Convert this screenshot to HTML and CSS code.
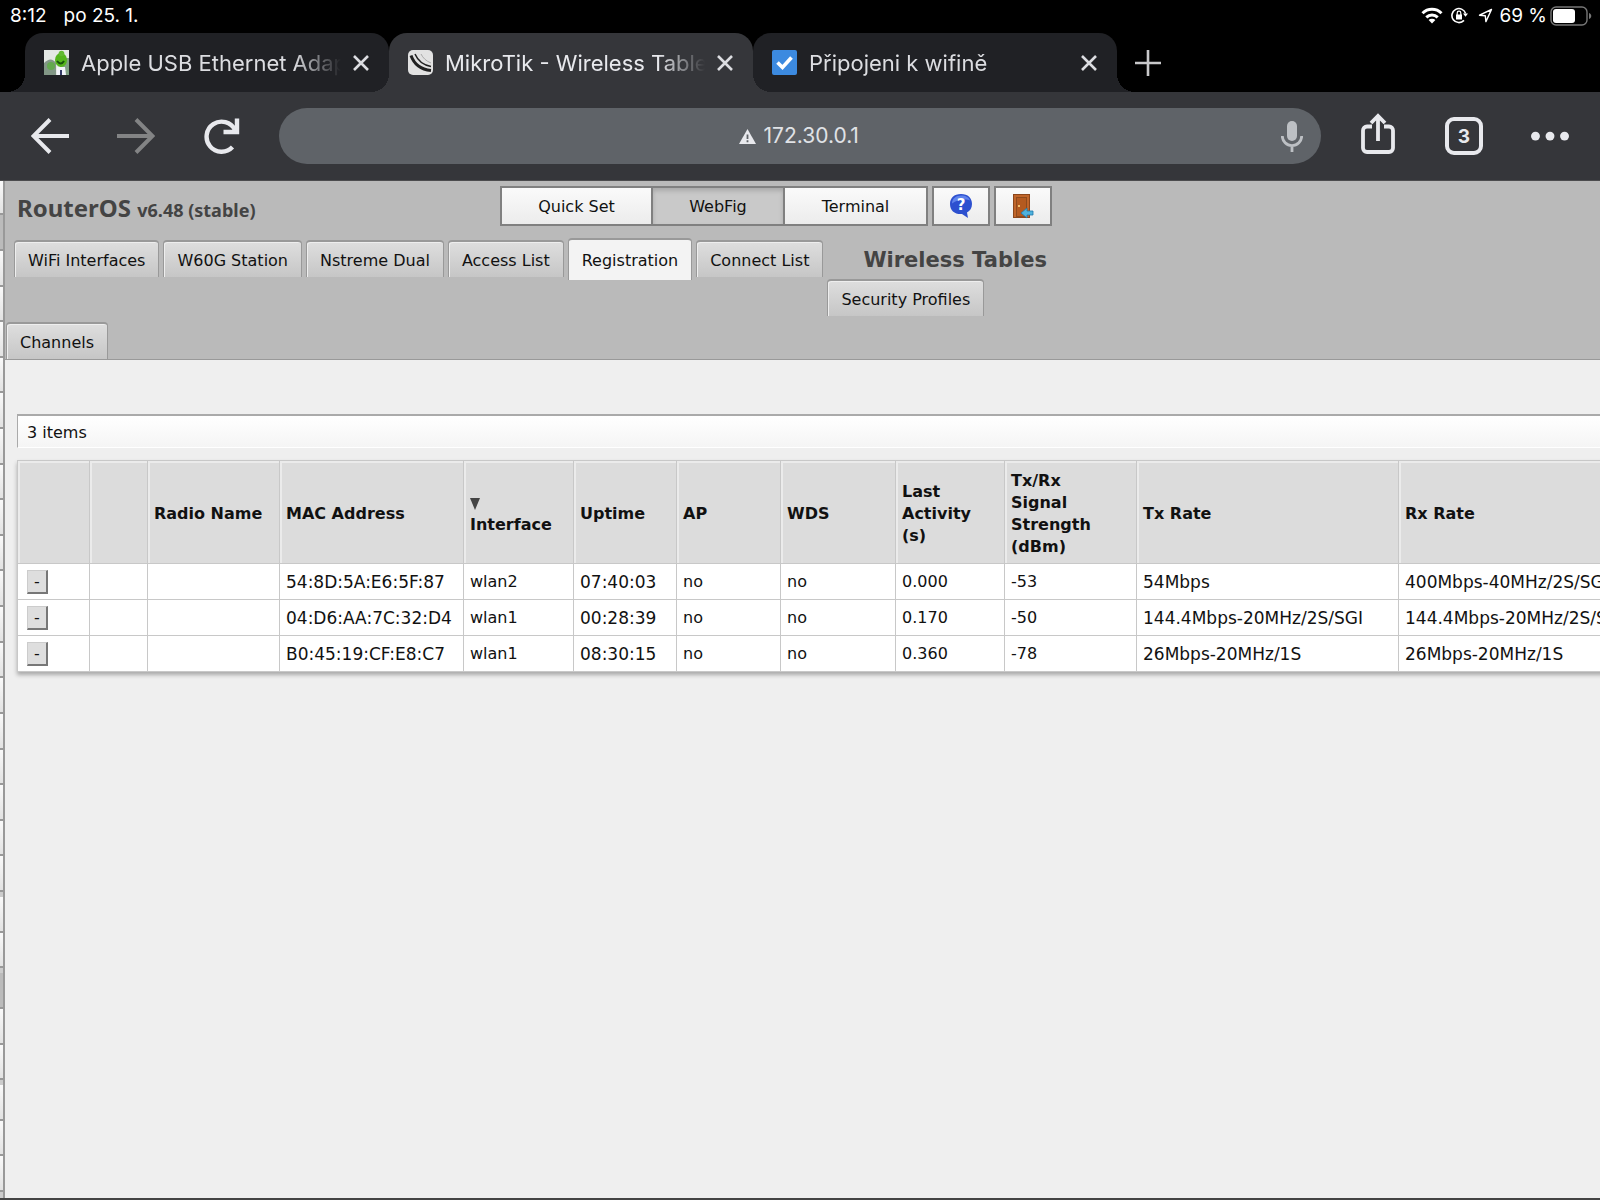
FILE: index.html
```
<!DOCTYPE html>
<html lang="cs">
	<head>
		<meta charset="UTF-8">
		<title>MikroTik - Wireless Tables</title>
		<link rel="stylesheet" href="styles.css">
	</head>
	<body>
		<div class="status">
			<span>8:12</span>
			<span>po 25. 1.</span>
			<div class="status-right">
				<svg class="wifi" width="22" height="17" viewBox="0 0 22 17"><g fill="none" stroke="#fff" stroke-width="3"><path d="M1.5 6.2a13.6 13.6 0 0 1 19 0"/><path d="M5.3 10.3a8.2 8.2 0 0 1 11.4 0"/></g><path fill="#fff" d="M11 16.5l-3.4-3.4a4.8 4.8 0 0 1 6.8 0z"/></svg>
				<svg class="lock" width="17" height="17" viewBox="0 0 17 17"><path d="M14.6 6.5A7 7 0 1 0 13 13.4" fill="none" stroke="#fff" stroke-width="1.6"/><path fill="#fff" d="M12 6.5h5l-2.5 3.2zM5 7.6h6v4.8H5z"/><path d="M6.2 8V6a1.8 1.8 0 0 1 3.6 0v2" fill="none" stroke="#fff" stroke-width="1.2"/></svg>
				<svg class="loc" width="15" height="15" viewBox="0 0 15 15"><path d="M13.5 1.5L1.5 7.2l5.8.6.6 5.8z" fill="none" stroke="#fff" stroke-width="1.4" stroke-linejoin="round"/></svg>
				<span class="percent">69 %</span>
				<svg width="42" height="20" viewBox="0 0 42 20"><rect x="1" y="1" width="36" height="18" rx="5" fill="none" stroke="#777" stroke-width="1.4"/><rect x="3" y="3" width="22" height="14" rx="3" fill="#fff"/><path d="M39 7c3 1 3 5 0 6z" fill="#777"/></svg>
			</div>
		</div>

		<div class="tabs">
			<div class="tab">
				<svg class="fav" viewBox="0 0 25 25"><rect width="25" height="25" fill="#e4e8e4"/><path fill="#829786" d="M0 13q7-7 12 0v12H0z"/><path fill="#80a184" d="M16 8h9v17h-9z"/><circle cx="7" cy="16" r="4" fill="#63a94e"/><path fill="#f2f4fa" d="M13 17h8l1 8h-9z"/><ellipse cx="17" cy="10" rx="6" ry="7" fill="#54b51c"/><circle cx="17.500" cy="3.500" r="2.800" fill="#62ba32"/><path d="M13 11q4 5 7 0" fill="none" stroke="#17520c" stroke-width="2"/><path d="M17 20v5" stroke="#333a66" stroke-width="2"/></svg>
				<span class="tab-title">Apple USB Ethernet Adapter</span>
				<button class="close" aria-label="Close"><svg viewBox="0 0 16 16"><path d="M1 1l14 14M15 1L1 15"/></svg></button>
			</div>
			<div class="tab active">
				<svg class="fav" viewBox="0 0 25 25"><rect width="25" height="25" rx="5" fill="#e2e2e2"/><g fill="none" stroke="#222"><path d="M3 5.500C6 14 13 19.500 23 20.500" stroke-width="3"/><path d="M7 4c3 7 8 11 16 12.500" stroke-width="1.500"/><path d="M13 4c2 4 5 7 10 9" stroke-width="1" stroke="#aaa"/></g></svg>
				<span class="tab-title">MikroTik - Wireless Tables</span>
				<button class="close" aria-label="Close"><svg viewBox="0 0 16 16"><path d="M1 1l14 14M15 1L1 15"/></svg></button>
			</div>
			<div class="tab">
				<svg class="fav" viewBox="0 0 25 25"><rect width="25" height="25" rx="2" fill="#3c8ae0"/><path d="M5.500 12.500l5 5 9-10" fill="none" stroke="#fff" stroke-width="3.600"/></svg>
				<span class="tab-title">Připojeni k wifině</span>
				<button class="close" aria-label="Close"><svg viewBox="0 0 16 16"><path d="M1 1l14 14M15 1L1 15"/></svg></button>
			</div>
			<button class="new-tab" aria-label="New tab"><svg width="26" height="26" viewBox="0 0 26 26"><path d="M13 0v26M0 13h26" stroke="#c8c8ca" stroke-width="2.600"/></svg></button>
		</div>

		<div class="toolbar">
			<div class="nav">
				<button aria-label="Back"><svg viewBox="0 0 38 36"><path d="M38 18H3M19 1.500L2.500 18 19 34.500" fill="none" stroke="#e8e9ed" stroke-width="4"/></svg></button>
				<button aria-label="Forward" disabled><svg viewBox="0 0 38 36"><path d="M0 18h35M19 1.500L35.500 18 19 34.500" fill="none" stroke="#838485" stroke-width="4"/></svg></button>
				<button aria-label="Reload"><svg viewBox="0 0 38 36"><path d="M29.500 29A15 15 0 1 1 32 12" fill="none" stroke="#e8e9ed" stroke-width="4.400"/><path d="M34 .5V14H20.500" fill="none" stroke="#e8e9ed" stroke-width="4.400"/></svg></button>
			</div>
			<form class="omnibox">
				<svg width="17" height="15" viewBox="0 0 17 15"><path d="M8.500 0L17 15H0z" fill="#e8e9ed"/><path d="M8.500 5.500v4.500M8.500 11.300v2" stroke="#5f6368" stroke-width="1.800"/></svg>
				<input type="text" value="172.30.0.1" aria-label="Address">
				<button type="button" class="mic" aria-label="Voice search"><svg width="22" height="31" viewBox="0 0 22 31"><rect x="6" y="0" width="10" height="20" rx="5" fill="#bdc0c4"/><path d="M1.300 15a9.700 9.700 0 0 0 19.400 0M11 24.500V31" fill="none" stroke="#bdc0c4" stroke-width="2.800"/></svg></button>
			</form>
			<div class="nav">
				<button class="share" aria-label="Share"><svg viewBox="0 0 38 42"><path d="M13 13.500H8a4 4 0 0 0-4 4V35a4 4 0 0 0 4 4h22a4 4 0 0 0 4-4V17.500a4 4 0 0 0-4-4h-5M19 28V3M12 10l7-7 7 7" fill="none" stroke="#e8e9ed" stroke-width="3.800"/></svg></button>
				<button class="count">3</button>
				<button aria-label="Menu"><svg viewBox="0 0 40 36"><g fill="#e8e9ed"><circle cx="4.700" cy="18" r="4.700"/><circle cx="20" cy="18" r="4.700"/><circle cx="35.300" cy="18" r="4.700"/></g></svg></button>
			</div>
		</div>

		<div class="page">
			<!-- right edge of the side menu -->
			<div class="side">
				<div class="item first"></div>
				<div class="item current"></div>
				<div class="group long">
					<div class="item"></div><div class="item"></div><div class="item"></div>
					<div class="item"></div><div class="item"></div><div class="item"></div>
					<div class="item"></div><div class="item"></div><div class="item"></div>
					<div class="item"></div><div class="item"></div><div class="item"></div>
					<div class="item"></div><div class="item"></div><div class="item"></div>
					<div class="item"></div><div class="item"></div><div class="item"></div>
				</div>
				<div class="group short">
					<div class="item"></div><div class="item"></div>
				</div>
				<div class="group">
					<div class="item current"></div><div class="item"></div><div class="item"></div>
				</div>
				<div class="group">
					<div class="item"></div><div class="item"></div><div class="item"></div>
				</div>
			</div>

			<div class="main">
				<div class="header">
					<div class="top">
						<h1>RouterOS <small>v6.48 (stable)</small></h1>
						<div class="modes">
							<button class="quick">Quick Set</button>
							<button class="webfig on">WebFig</button>
							<button class="terminal">Terminal</button>
						</div>
						<button class="tool" aria-label="Help"><svg width="24" height="26" viewBox="0 0 24 26"><path d="M12 1c7 0 11 4 11 10 0 4-2 7-5 8.500l1 5.500-6-4C6 21.500 1 18 1 11 1 5 5 1 12 1z" fill="#2d50cf"/><path d="M12 2.500c5 0 8 2 9 5-4-2-13-1-18 3 0-5 4-8 9-8z" fill="#5f83ec"/><text x="12" y="17" class="q">?</text></svg></button>
						<button class="tool" aria-label="Log out"><svg width="24" height="26" viewBox="0 0 24 26"><rect x="2.500" y="1.500" width="16" height="23" fill="#c0652a" stroke="#8c461b"/><rect x="5.500" y="4.500" width="10" height="19" fill="#b45a20" stroke="#8f4a1c"/><path d="M7 13h2" stroke="#f0c070" stroke-width="2"/><path d="M10 20l6-5v3h6v4h-6v3z" fill="#4fb2dd" stroke="#1f78ac" stroke-width=".8"/></svg></button>
					</div>
					<div class="sections">
						<a href="#">WiFi Interfaces</a>
						<a href="#">W60G Station</a>
						<a href="#">Nstreme Dual</a>
						<a href="#">Access List</a>
						<a href="#" class="on">Registration</a>
						<a href="#">Connect List</a>
						<div class="heading">
							<h2>Wireless Tables</h2>
							<a href="#">Security Profiles</a>
						</div>
					</div>
					<div class="sections last">
						<a href="#">Channels</a>
					</div>
				</div>

				<div class="content">
					<div class="info">3 items</div>
					<table>
						<colgroup>
							<col class="c-btn"><col class="c-flag"><col class="c-radio"><col class="c-mac">
							<col class="c-iface"><col class="c-up"><col class="c-ap"><col class="c-wds">
							<col class="c-last"><col class="c-radio"><col class="c-rate"><col class="c-rate">
						</colgroup>
						<tr>
							<th></th>
							<th></th>
							<th>Radio Name</th>
							<th>MAC Address</th>
							<th><span class="sort"></span>Interface</th>
							<th>Uptime</th>
							<th>AP</th>
							<th>WDS</th>
							<th>Last Activity (s)</th>
							<th>Tx/Rx<br>Signal<br>Strength<br>(dBm)</th>
							<th>Tx Rate</th>
							<th>Rx Rate</th>
						</tr>
						<tr>
							<td><button>-</button></td>
							<td></td>
							<td></td>
							<td class="long">54:8D:5A:E6:5F:87</td>
							<td>wlan2</td>
							<td class="long">07:40:03</td>
							<td>no</td>
							<td>no</td>
							<td>0.000</td>
							<td>-53</td>
							<td class="long">54Mbps</td>
							<td class="long">400Mbps-40MHz/2S/SGI</td>
						</tr>
						<tr>
							<td><button>-</button></td>
							<td></td>
							<td></td>
							<td class="long">04:D6:AA:7C:32:D4</td>
							<td>wlan1</td>
							<td class="long">00:28:39</td>
							<td>no</td>
							<td>no</td>
							<td>0.170</td>
							<td>-50</td>
							<td class="long">144.4Mbps-20MHz/2S/SGI</td>
							<td class="long">144.4Mbps-20MHz/2S/SGI</td>
						</tr>
						<tr>
							<td><button>-</button></td>
							<td></td>
							<td></td>
							<td class="long">B0:45:19:CF:E8:C7</td>
							<td>wlan1</td>
							<td class="long">08:30:15</td>
							<td>no</td>
							<td>no</td>
							<td>0.360</td>
							<td>-78</td>
							<td class="long">26Mbps-20MHz/1S</td>
							<td class="long">26Mbps-20MHz/1S</td>
						</tr>
					</table>
				</div>
			</div>
		</div>
	</body>
</html>
```
FILE: styles.css
```
*{margin: 0;padding: 0;box-sizing: border-box;}
body{display: flex;flex-direction: column;min-height: 100vh;overflow: hidden;background: #efefef;font-family: "DejaVu Sans", Verdana, sans-serif;font-size: 16px;color: #111;}
button{border: 0;background: none;font: inherit;color: inherit;}
svg{display: block;}
a{color: inherit;text-decoration: none;}

/* status bar */
.status{display: flex;align-items: center;gap: 17px;height: 33px;padding: 0 8px 2px 10px;background: #000;color: #fff;font: 19px Inter, sans-serif;}
.status-right{display: flex;align-items: center;margin-left: auto;}
.lock{margin-left: 8px;}
.loc{margin: 0 6px 0 10px;}
.percent{margin-right: 3px;}

/* browser tabs */
.tabs{display: flex;height: 59px;padding-left: 25px;background: #000;font: 22px Inter, sans-serif;color: #dcdde1;}
.tab{position: relative;display: flex;align-items: center;gap: 12px;flex: 0 1 364px;min-width: 0;padding: 0 20px 0 19px;background: #202125;border-radius: 18px 18px 0 0;}
.tab:before,.tab:after{content: "";position: absolute;bottom: 0;width: 18px;height: 18px;}
.tab:before{left: -18px;background: radial-gradient(circle at 0 0, transparent 18px, #202125 18px);}
.tab:after{right: -18px;background: radial-gradient(circle at 100% 0, transparent 18px, #202125 18px);}
.tab.active{z-index: 1;background: #35363a;color: #e8e9ed;}
.tab.active:before{background: radial-gradient(circle at 0 0, transparent 18px, #35363a 18px);}
.tab.active:after{background: radial-gradient(circle at 100% 0, transparent 18px, #35363a 18px);}
.fav{width: 25px;height: 25px;flex: none;}
.tab-title{flex: 1;overflow: hidden;white-space: nowrap;-webkit-mask-image: linear-gradient(to right, #000 82%, transparent);mask-image: linear-gradient(to right, #000 82%, transparent);}
.close svg{width: 16px;height: 16px;stroke: #dcdde1;stroke-width: 2.6;}
.new-tab{padding: 0 18px;}

/* address bar */
.toolbar{display: flex;align-items: center;gap: 38px;height: 89px;padding: 0 31px 0 31px;background: #35363a;border-bottom: 1px solid #4c4c4e;color: #e8e9ed;font-family: Inter, sans-serif;}
.nav{display: flex;align-items: center;gap: 48px;}
.nav button{width: 38px;}
.nav svg{width: 100%;}
.nav .share{padding-bottom: 4px;}
.nav .count{height: 38px;border: 4px solid #e8e9ed;border-radius: 9px;font-size: 19px;font-weight: 700;}
.omnibox{position: relative;display: flex;flex: 1;align-items: center;justify-content: center;gap: 8px;height: 56px;border-radius: 28px;background: #5f6368;}
.omnibox input{width: 98px;height: 28px;padding-bottom: 2px;border: 0;background: none;outline: none;color: #e0e2e6;font: 21px Inter, sans-serif;}
.mic{position: absolute;right: 18px;}

.page{display: flex;flex: 1;border-bottom: 2px solid #444;}
.side{display: flex;flex: none;flex-direction: column;gap: 5px;width: 5px;padding-bottom: 6px;border-right: 2px solid #999;background: #ccc;}
.group{display: flex;flex-direction: column;flex: 3 1 0;}
.group.long{flex-grow: 18;margin-top: -5px;}
.group.short{flex-grow: 2;}
.item{flex: 1;border-bottom: 2px solid #999;background: linear-gradient(#fafafa, #e2e2e2);}
.item.first{flex: none;height: 34px;}
.item.current{background: #bbb;}
.side > .current{flex: none;height: 36px;margin-top: -5px;}

.main{flex: 1;min-width: 0;overflow: hidden;}
.header{background: #bababa;border-bottom: 1px solid #999;}
.top{display: flex;align-items: flex-start;padding: 5px 0 0 12px;}
.top h1{flex: 0 0 483px;padding-top: 5px;font: bold 24px/34px "Noto Sans", sans-serif;color: #444;}
.top small{font-size: 18px;}
.modes{display: flex;border: 2px solid #808080;background: linear-gradient(#fafafa, #ececec);}
.modes button{height: 36px;}
.modes .quick{width: 149px;}
.modes .webfig{width: 134px;}
.modes .terminal{width: 141px;}
.modes .on{background: #c9c9c9;border: solid #808080;border-width: 0 2px;box-shadow: inset 0 3px 4px #aaa;}
.tool{display: flex;justify-content: center;width: 58px;height: 40px;margin-left: 4px;padding-top: 5px;border: 2px solid #808080;background: linear-gradient(#fafafa, #ececec);}
.q{font: bold 15px "DejaVu Sans", sans-serif;fill: #fff;text-anchor: middle;}

.sections{display: flex;align-items: flex-start;gap: 4px;padding: 13px 0 0 9px;}
.sections a{height: 37px;padding: 0 13px;border: 1px solid #999;border-top-width: 2px;border-bottom: 0;border-radius: 4px 4px 0 0;background: linear-gradient(#dedede, #c6c6c6);box-shadow: inset 1px 1px 0 #eee;line-height: 37px;white-space: nowrap;}
.sections a.on{height: 42px;margin: -2px 0 -3px;padding-top: 2px;background: #f3f3f3;box-shadow: none;}
.heading h2{height: 39px;padding-left: 36px;font-size: 21px;line-height: 41px;color: #444;}
.heading a{display: block;width: max-content;}
.sections.last{padding: 6px 0 0 1px;}

.content{padding: 54px 0 40px 12px;}
.info{height: 34px;padding-left: 9px;border: solid #aaa;border-width: 2px 0 0 1px;border-bottom: 1px solid #fff;background: linear-gradient(#fff, #f5f5f5);line-height: 34px;}
table{width: 1643px;margin-top: 12px;table-layout: fixed;border-collapse: collapse;background: #fff;box-shadow: 0 3px 4px #aaa;}
th,td{padding: 0 6px;border: 1px solid #c8c8c8;text-align: left;}
th{height: 103px;padding-top: 4px;background: #dcdcdc;box-shadow: inset 2px 2px 0 #ebebeb;line-height: 22px;}
td{height: 36px;white-space: nowrap;}
td.long{font-size: 17px;}
td button{display: block;width: 21px;height: 24px;margin-left: 3px;border: 1px solid #ccc;border-right: 2px solid #777;border-bottom: 2px solid #777;background: #dedede;}
.sort{display: block;width: 10px;margin: 6px 0 4px;border: solid transparent;border-width: 12px 5px 0;border-top-color: #444;}
.c-btn{width: 72px;}
.c-flag{width: 58px;}
.c-radio{width: 132px;}
.c-mac{width: 184px;}
.c-iface{width: 110px;}
.c-up{width: 103px;}
.c-ap{width: 104px;}
.c-wds{width: 115px;}
.c-last{width: 109px;}
.c-rate{width: 262px;}
```
